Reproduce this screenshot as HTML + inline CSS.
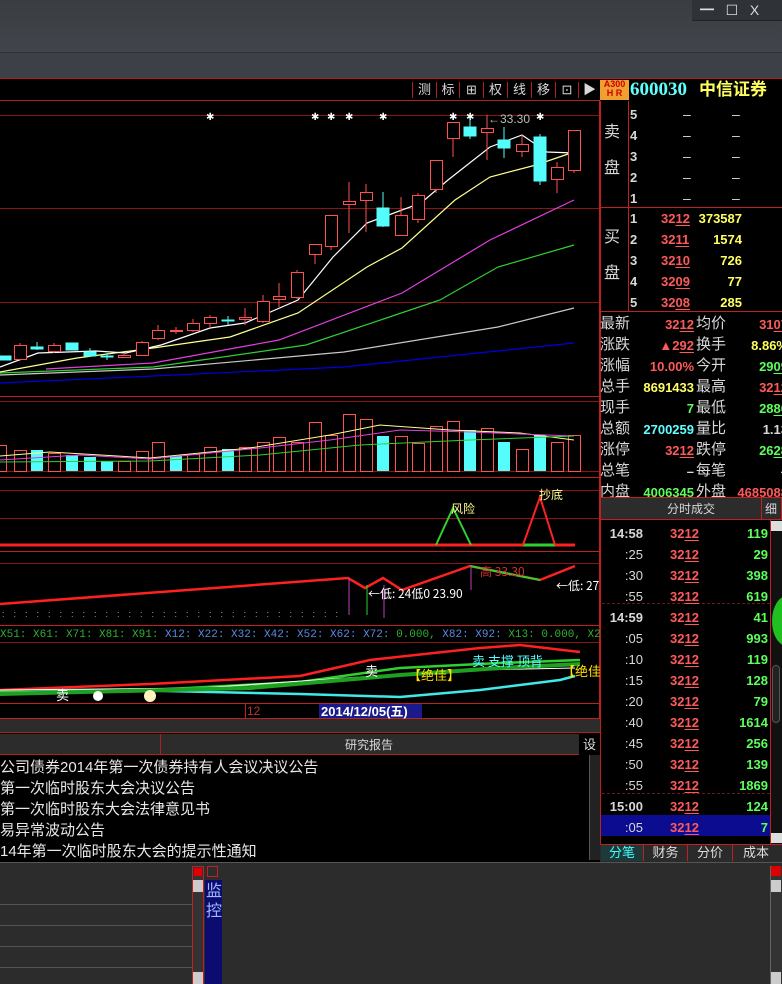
<!DOCTYPE html>
<html><head><meta charset="utf-8">
<style>
*{margin:0;padding:0;box-sizing:border-box}
body{width:782px;height:984px;overflow:hidden;background:#000;font-family:"Liberation Sans","Noto Sans CJK SC",sans-serif;position:relative}
.a{position:absolute}
.t{position:absolute;white-space:nowrap;font-size:14px;line-height:16px}
.n{font-family:"Liberation Sans","Noto Sans CJK SC",sans-serif;font-weight:bold;font-size:13px}
.r{color:#ff5a5a}.y{color:#ffff60}.g{color:#5cff5c}.c{color:#60ffff}.w{color:#d8d8d8}
u{text-decoration:underline;text-underline-offset:2px}
</style></head><body>
<div class="a" style="left:0;top:0;width:782px;height:52px;background:linear-gradient(#3a3d42,#41444a)"></div>
<div class="a" style="left:692px;top:0;width:90px;height:21px;background:#2f3237;border-bottom:1px solid #222"></div>
<div class="t" style="left:700px;top:2px;color:#ddd;font-size:14px">━&nbsp;&nbsp;&nbsp;☐&nbsp;&nbsp;&nbsp;X</div>
<div class="a" style="left:0;top:52px;width:782px;height:26px;background:#3d4046;border-top:1px solid #2e3034"></div>
<div class="a" style="left:0;top:78px;width:782px;height:1px;background:#b02020"></div>

<!-- toolbar -->
<div class="a" style="left:0;top:79px;width:600px;height:22px;background:#000;border-bottom:1px solid #b02020"></div>
<div class="t w" style="left:412px;top:82px;font-size:13px;letter-spacing:0">
<span style="display:inline-block;width:24px;text-align:center;border-left:1px solid #b02020">测</span><span style="display:inline-block;width:23px;text-align:center;border-left:1px solid #b02020">标</span><span style="display:inline-block;width:24px;text-align:center;border-left:1px solid #b02020">⊞</span><span style="display:inline-block;width:24px;text-align:center;border-left:1px solid #b02020">权</span><span style="display:inline-block;width:24px;text-align:center;border-left:1px solid #b02020">线</span><span style="display:inline-block;width:24px;text-align:center;border-left:1px solid #b02020">移</span><span style="display:inline-block;width:23px;text-align:center;border-left:1px solid #b02020">⊡</span><span style="display:inline-block;width:22px;text-align:center;border-left:1px solid #b02020">▶</span></div>
<div class="a" style="left:600px;top:80px;width:29px;height:20px;background:#f0a030;color:#c00;font-size:9px;line-height:9px;font-weight:bold;text-align:center">A300<br>H R</div>
<div class="t c" style="left:630px;top:80px;font-size:19px;line-height:20px;font-weight:bold;font-family:'Liberation Serif',serif">600030</div>
<div class="t y" style="left:699px;top:80px;font-size:17px;line-height:20px;font-weight:bold">中信证券</div>

<svg class="a" style="left:0;top:101px" width="600" height="760" viewBox="0 101 600 760">
<g stroke="#8a1515" stroke-width="1">
<line x1="0" y1="115.5" x2="600" y2="115.5"/><line x1="0" y1="208.5" x2="600" y2="208.5"/><line x1="0" y1="302.5" x2="600" y2="302.5"/>
<line x1="0" y1="396.5" x2="600" y2="396.5" stroke="#c02020"/><line x1="0" y1="401.5" x2="600" y2="401.5"/><line x1="0" y1="471.5" x2="600" y2="471.5"/>
<line x1="0" y1="477.5" x2="600" y2="477.5" stroke="#c02020"/><line x1="0" y1="490.5" x2="600" y2="490.5"/><line x1="0" y1="518.5" x2="600" y2="518.5"/>
<line x1="0" y1="551.5" x2="600" y2="551.5" stroke="#c02020"/><line x1="0" y1="563.5" x2="600" y2="563.5"/>
<line x1="0" y1="625.5" x2="600" y2="625.5" stroke="#c02020"/><line x1="0" y1="642.5" x2="600" y2="642.5"/><line x1="0" y1="703.5" x2="600" y2="703.5" stroke="#c02020"/>
<line x1="0" y1="718.5" x2="600" y2="718.5" stroke="#c02020"/>
<line x1="599.5" y1="101" x2="599.5" y2="733" stroke="#c02020"/>
</g>
<g fill="#fff" font-size="10" font-family="Liberation Sans">
<text x="206" y="120">✱</text><text x="311" y="120">✱</text><text x="327" y="120">✱</text><text x="345" y="120">✱</text><text x="379" y="120">✱</text><text x="449" y="120">✱</text><text x="466" y="120">✱</text><text x="536" y="120">✱</text>
</g>
<text x="488" y="123" fill="#bbb" font-size="12" font-family="Liberation Sans">←33.30</text>
<!-- MAs -->
<g fill="none" stroke-width="1.2">
<polyline stroke="#0000e0" points="0,383 153,376 344,367 574,343"/>
<polyline stroke="#c8c8c8" points="0,375 153,369 344,352 498,327 574,308"/>
<polyline stroke="#30d030" points="0,373 153,367 306,345 440,300 498,267 574,245"/>
<polyline stroke="#e040e0" points="46,369 153,363 279,340 402,293 490,240 574,200"/>
<polyline stroke="#ffff90" points="0,372 77,358 153,348 230,337 298,313 367,267 402,248 455,200 490,177 536,165 574,152"/>
<polyline stroke="#ffffff" points="0,367 38,353 96,351 126,353 161,345 210,328 245,323 298,300 333,257 367,223 421,203 448,180 490,147 522,135 547,152 574,153"/>
</g>
<!-- red candles -->
<g stroke="#ff5050" fill="#000" stroke-width="1">
<path d="M20 343V361M54 343V353M124 354V358M142 341V356M158 325V340M176 327V334M193 319V332M210 315V328M245 308V325M263 295V323M279 283V307M297 270V299M315 244V264M331 215V250M349 182V233M366 184V232M401 197V236M418 193V223M436 160V193M453 122V157M487 115V160M522 135V157M557 162V193M574 130V173"/>
<rect x="14.5" y="345.5" width="12" height="14"/><rect x="48.5" y="345.5" width="12" height="6"/><rect x="118.5" y="355.5" width="12" height="2"/><rect x="136.5" y="342.5" width="12" height="13"/><rect x="152.5" y="330.5" width="12" height="8"/><rect x="170.5" y="330.5" width="12" height="1"/><rect x="187.5" y="323.5" width="12" height="7"/><rect x="204.5" y="317.5" width="12" height="6"/><rect x="239.5" y="317.5" width="12" height="2"/><rect x="257.5" y="301.5" width="12" height="20"/><rect x="273.5" y="296.5" width="12" height="3"/><rect x="291.5" y="272.5" width="12" height="25"/><rect x="309.5" y="244.5" width="12" height="10"/><rect x="325.5" y="215.5" width="12" height="31"/><rect x="343.5" y="201.5" width="12" height="3"/><rect x="360.5" y="192.5" width="12" height="8"/><rect x="395.5" y="215.5" width="12" height="20"/><rect x="412.5" y="195.5" width="12" height="24"/><rect x="430.5" y="160.5" width="12" height="29"/><rect x="447.5" y="122.5" width="12" height="16"/><rect x="481.5" y="128.5" width="12" height="4"/><rect x="516.5" y="144.5" width="12" height="7"/><rect x="551.5" y="167.5" width="12" height="12"/><rect x="568.5" y="130.5" width="12" height="40"/>
</g>
<g stroke="#54fcfc" fill="#54fcfc">
<path d="M37 342V350M90 348V357M107 353V360M228 316V325M383 192V227M470 118V139M504 127V158M540 134V185"/>
<rect x="0" y="356" width="11" height="4"/><rect x="31" y="347" width="12" height="2"/><rect x="66" y="343" width="12" height="7"/><rect x="84" y="352" width="12" height="4"/><rect x="101" y="356" width="12" height="1"/><rect x="222" y="320" width="12" height="1"/><rect x="377" y="208" width="12" height="18"/><rect x="464" y="127" width="12" height="9"/><rect x="498" y="140" width="12" height="8"/><rect x="534" y="137" width="12" height="44"/>
</g>
<!-- volume -->
<g stroke="#ff5050" fill="none">
<rect x="-2.5" y="445.5" width="9" height="26"/><rect x="14.5" y="450.5" width="12" height="21"/><rect x="48.5" y="453.5" width="12" height="18"/><rect x="118.5" y="461.5" width="12" height="10"/><rect x="136.5" y="451.5" width="12" height="20"/><rect x="152.5" y="442.5" width="12" height="29"/><rect x="187.5" y="454.5" width="12" height="17"/><rect x="204.5" y="447.5" width="12" height="24"/><rect x="239.5" y="447.5" width="12" height="24"/><rect x="257.5" y="442.5" width="12" height="29"/><rect x="273.5" y="437.5" width="12" height="34"/><rect x="291.5" y="442.5" width="12" height="29"/><rect x="309.5" y="422.5" width="12" height="49"/><rect x="325.5" y="435.5" width="12" height="36"/><rect x="343.5" y="414.5" width="12" height="57"/><rect x="360.5" y="419.5" width="12" height="52"/><rect x="395.5" y="436.5" width="12" height="35"/><rect x="412.5" y="443.5" width="12" height="28"/><rect x="430.5" y="426.5" width="12" height="45"/><rect x="447.5" y="421.5" width="12" height="50"/><rect x="481.5" y="428.5" width="12" height="43"/><rect x="516.5" y="449.5" width="12" height="22"/><rect x="551.5" y="442.5" width="12" height="29"/><rect x="568.5" y="435.5" width="12" height="36"/>
</g>
<g fill="#54fcfc">
<rect x="31" y="450" width="12" height="21"/><rect x="66" y="455" width="12" height="16"/><rect x="84" y="457" width="12" height="14"/><rect x="101" y="461" width="12" height="10"/><rect x="170" y="456" width="12" height="15"/><rect x="222" y="449" width="12" height="22"/><rect x="377" y="436" width="12" height="35"/><rect x="464" y="430" width="12" height="41"/><rect x="498" y="442" width="12" height="29"/><rect x="534" y="435" width="12" height="36"/>
</g>
<g fill="none" stroke-width="1">
<polyline stroke="#ffff90" points="0,456 50,452 150,458 250,448 330,435 380,425 450,430 520,433 574,440"/>
<polyline stroke="#e040e0" points="0,460 80,455 150,459 260,448 330,440 400,430 470,432 520,434 574,436"/>
<polyline stroke="#30d030" points="0,462 150,461 260,455 360,445 470,440 574,436"/>
</g>
<!-- signal pane -->
<line x1="0" y1="545" x2="575" y2="545" stroke="#ff2020" stroke-width="3"/>
<line x1="523" y1="545" x2="555" y2="545" stroke="#30d030" stroke-width="3"/>
<polyline points="436,545 453,508 471,545" fill="none" stroke="#30d030" stroke-width="2"/>
<polyline points="523,545 540,497 555,545" fill="none" stroke="#ff2020" stroke-width="2"/>
<text x="451" y="513" fill="#ffff90" font-size="12" font-family="Noto Sans CJK SC">风险</text>
<text x="539" y="499" fill="#ffff90" font-size="12" font-family="Noto Sans CJK SC">抄底</text>
<!-- zigzag pane -->
<polyline points="0,604 348,578 365,588 383,578 402,590 470,566 540,580 575,566" fill="none" stroke="#ff2020" stroke-width="2.5"/>
<polyline points="470,566 540,580" fill="none" stroke="#30d030" stroke-width="2"/>
<line x1="349" y1="578" x2="349" y2="615" stroke="#c040c0"/><line x1="367" y1="585" x2="367" y2="615" stroke="#30d030"/><line x1="384" y1="585" x2="384" y2="618" stroke="#c040c0"/><line x1="471" y1="566" x2="471" y2="590" stroke="#c040c0"/>
<text x="368" y="598" fill="#fff" font-size="12" font-family="Noto Sans CJK SC">←低: 24低0 23.90</text>
<text x="556" y="590" fill="#fff" font-size="12" font-family="Noto Sans CJK SC">←低: 27</text>
<text x="480" y="576" fill="#d03030" font-size="12" font-family="Noto Sans CJK SC">高 33.30</text>
<text x="2" y="617" fill="#aaa" font-size="9" letter-spacing="9">::::::::::::::::::::::::::::::</text>
<!-- X row -->
<text x="0" y="637" font-size="11" font-family="Liberation Mono"><tspan fill="#30b030">X51: X61: X71: X81: X91: </tspan><tspan fill="#5a8ae0">X12: X22: X32: X42: X52: X62: X72: </tspan><tspan fill="#30b030">0.000, </tspan><tspan fill="#5a8ae0">X82: X92: </tspan><tspan fill="#30b030">X13: 0.000, X23: 0.000, X</tspan></text>
<!-- bottom pane -->
<g fill="none" stroke-width="2.5">
<polyline stroke="#ff2020" points="0,690 150,684 300,676 370,660 480,648 520,645 580,652"/>
<polyline stroke="#30d030" points="0,692 150,690 300,682 400,668 500,663 580,660"/>
<polyline stroke="#40e8e8" points="0,693 120,690 300,694 400,697 480,690 560,680 575,676"/>
<polyline stroke="#ffffff" stroke-width="1" points="0,690 200,688 360,677 480,670 575,668"/>
<polyline stroke="#20a020" stroke-width="4" points="0,694 250,688 400,675 500,668 580,664"/>
</g>
<text x="56" y="700" fill="#fff" font-size="13" font-family="Noto Sans CJK SC">卖</text>
<circle cx="98" cy="696" r="5" fill="#fff"/><circle cx="150" cy="696" r="6" fill="#fff4c0"/>
<text x="365" y="676" fill="#fff" font-size="13" font-family="Noto Sans CJK SC">卖</text>
<text x="408" y="680" fill="#ffe000" font-size="13" font-family="Noto Sans CJK SC">【绝佳】</text>
<text x="472" y="666" fill="#5ff" font-size="13" font-family="Noto Sans CJK SC">卖 支撑 顶背</text>
<text x="562" y="676" fill="#ffe000" font-size="13" font-family="Noto Sans CJK SC">【绝佳</text>
<!-- date row -->
<line x1="245.5" y1="704" x2="245.5" y2="718" stroke="#c02020"/>
<text x="247" y="715" fill="#c03030" font-size="12" font-family="Liberation Sans">12</text>
<rect x="319" y="704" width="103" height="14" fill="#1a1a8a"/>
<text x="321" y="716" fill="#fff" font-size="13" font-weight="bold" font-family="Liberation Sans,Noto Sans CJK SC">2014/12/05(五)</text>
</svg>

<!-- gray bars -->
<div class="a" style="left:0;top:719px;width:600px;height:14px;background:#2c2c2c;border-bottom:1px solid #b02020"></div>
<div class="a" style="left:0;top:734px;width:600px;height:21px;background:#2c2c2c;border-bottom:1px solid #b02020"></div>
<div class="a" style="left:160px;top:734px;width:1px;height:21px;background:#b02020"></div>
<div class="t w" style="left:345px;top:737px;font-size:12px">研究报告</div>
<div class="a" style="left:579px;top:734px;width:21px;height:21px;background:#000;color:#ddd;font-size:13px;text-align:center;line-height:21px">设</div>
<div class="a" style="left:0;top:755px;width:600px;height:105px;background:#000;overflow:hidden">
<div class="t w" style="left:0;top:2px;font-size:15px;line-height:21px;color:#e8e8e8">公司债券2014年第一次债券持有人会议决议公告<br>第一次临时股东大会决议公告<br>第一次临时股东大会法律意见书<br>易异常波动公告<br>14年第一次临时股东大会的提示性通知</div>
<div class="a" style="left:589px;top:0;width:11px;height:105px;background:#222;border-left:1px solid #555"></div>
</div>

<!-- right panel -->
<div class="a" style="left:600px;top:101px;width:182px;height:396px;border-left:1px solid #c02020"></div>
<div class="a" style="left:600px;top:207px;width:182px;height:1px;background:#c02020"></div>
<div class="a" style="left:600px;top:311px;width:182px;height:1px;background:#c02020"></div>
<div class="a" style="left:628px;top:101px;width:1px;height:210px;background:#c02020"></div>
<div class="t w" style="left:604px;top:124px;font-size:16px;line-height:18px">卖<br><br>盘</div>
<div class="t w" style="left:604px;top:229px;font-size:16px;line-height:18px">买<br><br>盘</div>
<div class="t w n" style="left:630px;top:104px;line-height:21px">5<br>4<br>3<br>2<br>1</div>
<div class="t w" style="left:683px;top:104px;line-height:21px">–<br>–<br>–<br>–<br>–</div>
<div class="t w" style="left:732px;top:104px;line-height:21px">–<br>–<br>–<br>–<br>–</div>
<div class="t w n" style="left:630px;top:208px;line-height:21px">1<br>2<br>3<br>4<br>5</div>
<div class="t r n" style="left:661px;top:208px;line-height:21px">32<u>12</u><br>32<u>11</u><br>32<u>10</u><br>32<u>09</u><br>32<u>08</u></div>
<div class="t y n" style="left:692px;top:208px;line-height:21px;width:50px;text-align:right">373587<br>1574<br>726<br>77<br>285</div>
<div class="t w" style="left:600px;top:313px;line-height:21px;font-size:15px">最新<br>涨跌<br>涨幅<br>总手<br>现手<br>总额<br>涨停<br>总笔<br>内盘</div>
<div class="t w" style="left:696px;top:313px;line-height:21px;font-size:15px">均价<br>换手<br>今开<br>最高<br>最低<br>量比<br>跌停<br>每笔<br>外盘</div>
<div class="t n" style="left:632px;top:314px;line-height:21px;width:62px;text-align:right"><span class="r">32<u>12</u></span><br><span class="r">▲2<u>92</u></span><br><span class="r">10.00%</span><br><span class="y">8691433</span><br><span class="g">7</span><br><span class="c">2700259</span><br><span class="r">32<u>12</u></span><br><span class="w">–</span><br><span class="g">4006345</span></div>
<div class="t n" style="left:728px;top:314px;line-height:21px;width:60px;text-align:right"><span class="r">31<u>07</u></span><br><span class="y">8.86%</span><br><span class="g">29<u>09</u></span><br><span class="r">32<u>12</u></span><br><span class="g">28<u>80</u></span><br><span class="w">1.13</span><br><span class="g">26<u>28</u></span><br><span class="w">–</span><br><span class="r">4685088</span></div>

<!-- trades -->
<div class="a" style="left:600px;top:497px;width:182px;height:23px;background:#2c2c2c;border:1px solid #c02020"></div>
<div class="t w" style="left:667px;top:501px;font-size:12px">分时成交</div>
<div class="a" style="left:761px;top:498px;width:1px;height:21px;background:#c02020"></div>
<div class="t w" style="left:765px;top:501px;font-size:12px">细</div>
<div class="a" style="left:600px;top:520px;width:1px;height:324px;background:#c02020"></div>
<div class="a" style="left:602px;top:603px;width:168px;border-top:1px dashed #6a1a1a"></div>
<div class="a" style="left:602px;top:793px;width:168px;border-top:1px dashed #6a1a1a"></div>
<div class="a" style="left:601px;top:815px;width:169px;height:21px;background:#0c0c90"></div>
<div class="t n w" style="left:603px;top:523px;line-height:21px;width:40px;text-align:right;font-size:13px">14:58<br><span style="font-weight:normal">:25</span><br><span style="font-weight:normal">:30</span><br><span style="font-weight:normal">:55</span><br>14:59<br><span style="font-weight:normal">:05</span><br><span style="font-weight:normal">:10</span><br><span style="font-weight:normal">:15</span><br><span style="font-weight:normal">:20</span><br><span style="font-weight:normal">:40</span><br><span style="font-weight:normal">:45</span><br><span style="font-weight:normal">:50</span><br><span style="font-weight:normal">:55</span><br>15:00<br><span style="font-weight:normal">:05</span></div>
<div class="t n r" style="left:670px;top:523px;line-height:21px">32<u>12</u><br>32<u>12</u><br>32<u>12</u><br>32<u>12</u><br>32<u>12</u><br>32<u>12</u><br>32<u>12</u><br>32<u>12</u><br>32<u>12</u><br>32<u>12</u><br>32<u>12</u><br>32<u>12</u><br>32<u>12</u><br>32<u>12</u><br>32<u>12</u></div>
<div class="t n g" style="left:718px;top:523px;line-height:21px;width:50px;text-align:right">119<br>29<br>398<br>619<br>41<br>993<br>119<br>128<br>79<br>1614<br>256<br>139<br>1869<br>124<br>7</div>
<div class="a" style="left:770px;top:520px;width:12px;height:324px;background:#111;border-left:1px solid #c02020"></div>
<div class="a" style="left:771px;top:521px;width:11px;height:10px;background:#ddd"></div>
<div class="a" style="left:771px;top:833px;width:11px;height:10px;background:#ddd"></div>
<div class="a" style="left:772px;top:665px;width:8px;height:58px;background:#222;border:1px solid #555;border-radius:4px"></div>
<div class="a" style="left:772px;top:596px;width:30px;height:50px;background:#1fc01f;border-radius:50%"></div>
<div class="a" style="left:600px;top:844px;width:182px;height:18px;background:#2a2a2a;border-top:1px solid #c02020"></div>
<div class="t" style="left:601px;top:845px;font-size:13px;line-height:16px"><span style="display:inline-block;width:42px;text-align:center;color:#40ffff;background:#1c3a3a">分笔</span><span style="display:inline-block;width:44px;text-align:center;color:#ddd;border-left:1px solid #c02020">财务</span><span style="display:inline-block;width:45px;text-align:center;color:#ddd;border-left:1px solid #c02020">分价</span><span style="display:inline-block;width:47px;text-align:center;color:#ddd;border-left:1px solid #c02020">成本</span></div>

<!-- bottom -->
<div class="a" style="left:0;top:862px;width:782px;height:122px;background:#2c2c2c;border-top:1px solid #555"></div>
<div class="a" style="left:0;top:884px;width:192px;height:100px;background:repeating-linear-gradient(#2c2c2c 0 20px,#555 20px 21px)"></div>
<div class="a" style="left:192px;top:866px;width:12px;height:118px;background:#333;border:1px solid #c02020"></div>
<div class="a" style="left:194px;top:868px;width:8px;height:8px;background:#d00"></div>
<div class="a" style="left:193px;top:880px;width:10px;height:12px;background:#ccc"></div>
<div class="a" style="left:193px;top:972px;width:10px;height:12px;background:#ccc"></div>
<div class="a" style="left:207px;top:866px;width:11px;height:11px;border:1px solid #c02020;background:#2c2c2c"></div>
<div class="a" style="left:205px;top:880px;width:17px;height:104px;background:#0c0c70"></div>
<div class="t" style="left:206px;top:882px;font-size:16px;line-height:20px;color:#a0b8ff">监<br>控</div>
<div class="a" style="left:770px;top:866px;width:12px;height:118px;background:#333;border-left:1px solid #666"></div>
<div class="a" style="left:771px;top:866px;width:10px;height:10px;background:#d00"></div>
<div class="a" style="left:771px;top:880px;width:10px;height:12px;background:#ccc"></div>
<div class="a" style="left:771px;top:972px;width:10px;height:12px;background:#ccc"></div>
</body></html>
